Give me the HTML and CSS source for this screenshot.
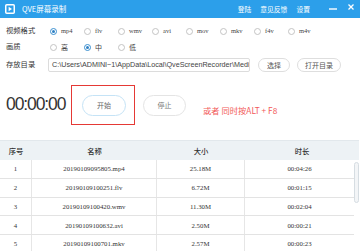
FILE: index.html
```html
<!DOCTYPE html>
<html>
<head>
<meta charset="utf-8">
<link rel="stylesheet" href="styles.css">
</head>
<body>
<div class="app">
  <div class="titlebar">
    <svg class="logo" width="10" height="10" viewBox="0 0 10 10"><rect x="0.75" y="0.75" width="8.5" height="8.5" rx="1" fill="none" stroke="#fff" stroke-width="1.5"/><path d="M3.6 2.8 L3.6 7.2 L7 5 Z" fill="#fff"/></svg>
    <span class="title">QVE屏幕录制</span>
    <span class="spacer"></span>
    <nav class="links"><span>登陆</span><span>意见反馈</span><span>设置</span></nav>
    <svg class="ctl-min" width="8" height="8" viewBox="0 0 8 8"><path d="M0 4 H8" stroke="#fff" stroke-width="1.4"/></svg>
    <svg class="ctl-close" width="6" height="6" viewBox="0 0 6 6"><path d="M0.5 0.5 L5.5 5.5 M5.5 0.5 L0.5 5.5" stroke="#fff" stroke-width="1.3"/></svg>
  </div>

  <div class="form">
    <div class="row">
      <span class="label">视频格式</span>
      <div class="radios">
        <label class="opt"><span class="radio on"></span><span class="otext">mp4</span></label>
        <label class="opt"><span class="radio"></span><span class="otext">flv</span></label>
        <label class="opt"><span class="radio"></span><span class="otext">wmv</span></label>
        <label class="opt"><span class="radio"></span><span class="otext">avi</span></label>
        <label class="opt"><span class="radio"></span><span class="otext">mov</span></label>
        <label class="opt"><span class="radio"></span><span class="otext">mkv</span></label>
        <label class="opt"><span class="radio"></span><span class="otext">f4v</span></label>
        <label class="opt"><span class="radio"></span><span class="otext">m4v</span></label>
      </div>
    </div>
    <div class="row">
      <span class="label">画质</span>
      <div class="radios">
        <label class="opt"><span class="radio"></span><span class="otext cjk">高</span></label>
        <label class="opt"><span class="radio on"></span><span class="otext cjk">中</span></label>
        <label class="opt"><span class="radio"></span><span class="otext cjk">低</span></label>
      </div>
    </div>
    <div class="row row-dir">
      <span class="label">存放目录</span>
      <div class="path">C:\Users\ADMINI~1\AppData\Local\QveScreenRecorder\Media</div>
      <span class="pill btn-choose">选择</span>
      <span class="pill btn-open">打开目录</span>
    </div>
  </div>

  <div class="controls">
    <div class="timer">00:00:00</div>
    <div class="hilite"><span class="pill big start">开始</span></div>
    <span class="pill big stop">停止</span>
    <span class="hint">或者 同时按ALT + F8</span>
  </div>

  <div class="table">
    <div class="thead">
      <span>序号</span><span>名称</span><span>大小</span><span>时长</span>
    </div>
    <div class="tbody">
      <div class="tr"><span>1</span><span>20190109095805.mp4</span><span>25.18M</span><span>00:04:26</span></div>
      <div class="tr"><span>2</span><span>20190109100251.flv</span><span>6.72M</span><span>00:01:15</span></div>
      <div class="tr"><span>3</span><span>20190109100420.wmv</span><span>11.30M</span><span>00:02:04</span></div>
      <div class="tr"><span>4</span><span>20190109100632.avi</span><span>2.50M</span><span>00:00:21</span></div>
      <div class="tr"><span>5</span><span>20190109100701.mkv</span><span>2.57M</span><span>00:00:23</span></div>
      <div class="scroll"></div>
    </div>
  </div>
</div>
</body>
</html>
```

FILE: styles.css
```css
* { box-sizing: border-box; }
html, body { margin: 0; padding: 0; background: #fff; }
body {
  width: 360px;
  height: 251px;
  overflow: hidden;
  font-family: "Noto Sans CJK SC", "Noto Sans", sans-serif;
  color: #333;
}
.app { width: 360px; height: 251px; display: flex; flex-direction: column; }

.titlebar {
  height: 18px;
  background: #2c9fea;
  display: flex;
  align-items: center;
  padding: 0 6px 0 5px;
  color: #fff;
  flex: none;
}
.logo { margin-right: 7px; }
.title { font-size: 7.5px; line-height: 1; }
.spacer { flex: 1; }
.links { display: flex; gap: 9px; font-size: 6.8px; line-height: 1; margin-right: 19px; }
.ctl-min { margin-right: 11px; }
.ctl-close { margin-top: -5px; }

.form { padding: 5px 0 0 6px; display: flex; flex-direction: column; }
.row { display: flex; align-items: center; height: 16px; }
.label { width: 44px; font-size: 7.3px; line-height: 1; color: #333; flex: none; }
.radios { display: flex; }
.opt { display: flex; align-items: center; width: 34px; }
.radio {
  width: 7px; height: 7px;
  border-radius: 50%;
  border: 1px solid #c4c4c4;
  background: #fff;
  margin-right: 4px;
  flex: none;
  position: relative;
}
.radio.on { border-color: #3a8fd0; }
.radio.on::after {
  content: "";
  position: absolute;
  left: 1px; top: 1px;
  width: 3px; height: 3px;
  border-radius: 50%;
  background: #2f80c4;
}
.otext { font-family: "Liberation Serif", serif; font-size: 6.5px; color: #444; line-height: 1; }
.otext.cjk { font-family: "Noto Sans CJK SC", sans-serif; font-size: 7px; }

.row-dir { margin-top: 2px; height: 15px; }
.path {
  width: 202px;
  height: 14px;
  margin-left: -2px;
  border: 1px solid #dcdcdc;
  border-radius: 2px;
  font-family: "Liberation Sans", sans-serif;
  font-size: 7.2px;
  line-height: 12px;
  padding-left: 3px;
  color: #444;
  white-space: nowrap;
  overflow: hidden;
}
.pill {
  display: flex;
  align-items: center;
  justify-content: center;
  border: 1px solid #dedede;
  border-radius: 8px;
  font-size: 7px;
  color: #555;
  height: 14px;
  background: #fff;
}
.btn-choose { width: 32px; margin-left: 8px; }
.btn-open { width: 44px; margin-left: 7px; }

.controls {
  display: flex;
  align-items: center;
  height: 40px;
  margin-top: 13px;
  flex: none;
}
.timer {
  width: 71px;
  padding-left: 6px;
  font-family: "Liberation Sans", sans-serif;
  font-size: 17.5px;
  letter-spacing: -1.1px;
  color: #333;
  line-height: 1;
}
.hilite {
  width: 64px;
  height: 40px;
  border: 1.5px solid #e53935;
  display: flex;
  align-items: center;
  justify-content: center;
  padding-left: 2px;
}
.pill.big { height: 21px; border-radius: 11px; font-size: 7px; }
.start { width: 44px; border-color: #c5e3f6; color: #666; }
.stop { width: 43px; margin-left: 8px; border-color: #e4e4e4; color: #777; }
.hint {
  margin-left: 17px;
  margin-top: 10px;
  font-size: 8.3px;
  color: #f25a5a;
  font-family: "Noto Sans CJK SC", sans-serif;
  line-height: 1;
  white-space: nowrap;
}

.table { margin-top: 15px; flex: none; }
.thead {
  display: grid;
  grid-template-columns: 32px 125px 88px 1fr;
  height: 20px;
  background: #edf2f5;
  border-top: 1px solid #e2e8ec;
  width: 359px;
  align-items: center;
  font-size: 7.3px;
  color: #333;
  font-weight: 500;
}
.thead span { text-align: center; }
.tbody { position: relative; width: 360px; }
.tr {
  display: grid;
  grid-template-columns: 32px 125px 88px 1fr;
  width: 354px;
  height: 18.75px;
  border-bottom: 1px solid #e3e3e3;
  font-family: "Liberation Serif", serif;
  font-size: 6.8px;
  color: #333;
}
.tr span {
  display: flex;
  align-items: center;
  justify-content: center;
  border-right: 1px solid #e6e6e6;
}
.tr span:last-child { border-right: none; }
.scroll {
  position: absolute;
  left: 354px;
  top: 2px;
  width: 5px;
  height: 41px;
  border: 1px solid #d6dde2;
  border-radius: 3px;
  background: #f3f5f7;
}
```
